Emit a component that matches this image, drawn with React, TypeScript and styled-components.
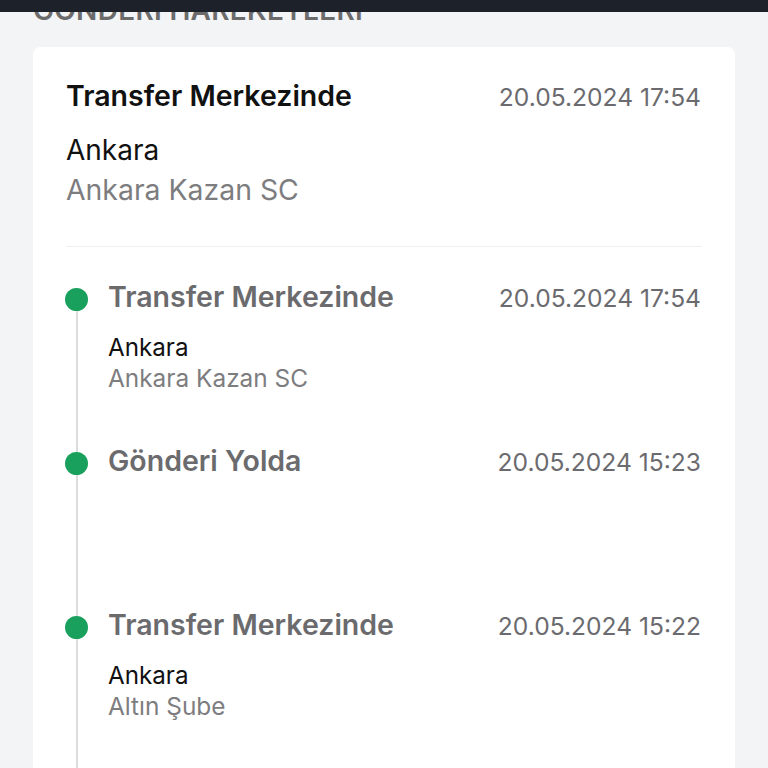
import React from "react";
import styled, { createGlobalStyle } from "styled-components";

const Global = createGlobalStyle`
  html, body { margin: 0; padding: 0; background: #f3f4f6; }
  body { font-family: Inter, "Noto Sans", "Liberation Sans", sans-serif; overflow: hidden; }
`;

const TopBar = styled.div`
  position: fixed;
  top: 0;
  left: 0;
  right: 0;
  height: 12px;
  background: #1c212a;
  z-index: 10;
`;

const Page = styled.main`
  padding: 0 33px;
`;

const SectionTitle = styled.h2`
  margin: -6px 0 0;
  font-size: 28px;
  line-height: 32px;
  font-weight: 600;
  color: #6b6b6b;
  letter-spacing: 0.3px;
  white-space: nowrap;
`;

const Card = styled.section`
  margin-top: 21px;
  background: #ffffff;
  border-radius: 8px;
  padding: 32px 33px 40px;
  min-height: 800px;
`;

const HeadRow = styled.div`
  display: flex;
  justify-content: space-between;
  align-items: baseline;
`;

const MainTitle = styled.div`
  font-size: 28.5px;
  line-height: 34px;
  font-weight: 600;
  color: #111111;
`;

const DateText = styled.div`
  font-size: 24.6px;
  line-height: 34px;
  color: #6b6b6f;
  padding-right: 1px;
`;

const City = styled.div<{ $big?: boolean }>`
  font-size: ${(p) => (p.$big ? "28px" : "24.2px")};
  line-height: ${(p) => (p.$big ? "40px" : "31px")};
  color: #111111;
  margin-top: ${(p) => (p.$big ? "16px" : "17px")};
`;

const Place = styled.div<{ $big?: boolean }>`
  font-size: ${(p) => (p.$big ? "28.4px" : "24.4px")};
  line-height: ${(p) => (p.$big ? "40px" : "30px")};
  color: #7d7d80;
`;

const Divider = styled.hr`
  border: none;
  border-top: 1px solid #f0f0f0;
  margin: 36px 0 33px;
`;

const Timeline = styled.div`
  display: flex;
  flex-direction: column;
`;

const Item = styled.div`
  display: grid;
  grid-template-columns: 42px 1fr;
  min-height: 164px;
`;

const Rail = styled.div`
  display: flex;
  flex-direction: column;
  align-items: flex-start;
`;

const Segment = styled.div<{ $hidden?: boolean; $grow?: boolean }>`
  width: 2px;
  margin-left: 10px;
  background: ${(p) => (p.$hidden ? "transparent" : "#dcdcdc")};
  height: ${(p) => (p.$grow ? "auto" : "8px")};
  flex: ${(p) => (p.$grow ? "1" : "none")};
`;

const Dot = styled.div`
  width: 23px;
  height: 23px;
  margin-left: -1px;
  border-radius: 50%;
  background: #18a05c;
`;

const Body = styled.div`
  display: flex;
  flex-direction: column;
`;

const StepTitle = styled(MainTitle)`
  color: #6b6b6e;
`;

type Step = { title: string; date: string; city?: string; place?: string };

const steps: Step[] = [
  { title: "Transfer Merkezinde", date: "20.05.2024 17:54", city: "Ankara", place: "Ankara Kazan SC" },
  { title: "Gönderi Yolda", date: "20.05.2024 15:23" },
  { title: "Transfer Merkezinde", date: "20.05.2024 15:22", city: "Ankara", place: "Altın Şube" },
  { title: "Gönderi Kabul Edildi", date: "20.05.2024 12:10", city: "Ankara", place: "Altın Şube" },
];

export default function App() {
  return (
    <>
      <Global />
      <TopBar />
      <Page>
        <SectionTitle>GÖNDERİ HAREKETLERİ</SectionTitle>
        <Card>
          <HeadRow>
            <MainTitle>Transfer Merkezinde</MainTitle>
            <DateText>20.05.2024 17:54</DateText>
          </HeadRow>
          <City $big>Ankara</City>
          <Place $big>Ankara Kazan SC</Place>
          <Divider />
          <Timeline>
            {steps.map((s, i) => (
              <Item key={i}>
                <Rail>
                  <Segment $hidden={i === 0} />
                  <Dot />
                  <Segment $grow />
                </Rail>
                <Body>
                  <HeadRow>
                    <StepTitle>{s.title}</StepTitle>
                    <DateText>{s.date}</DateText>
                  </HeadRow>
                  {s.city && <City>{s.city}</City>}
                  {s.place && <Place>{s.place}</Place>}
                </Body>
              </Item>
            ))}
          </Timeline>
        </Card>
      </Page>
    </>
  );
}
